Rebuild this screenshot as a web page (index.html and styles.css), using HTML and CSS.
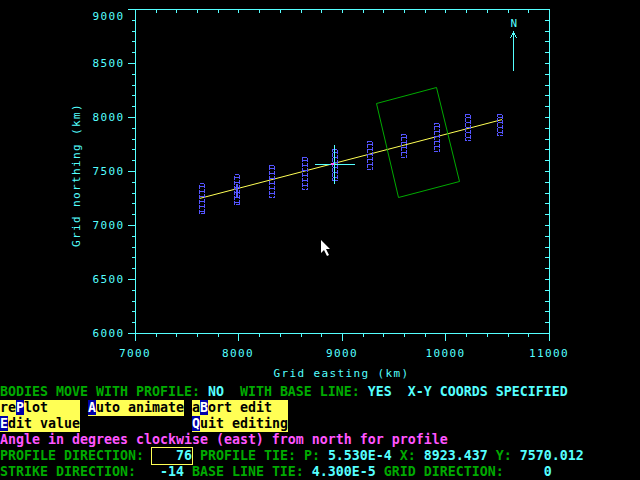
FILE: index.html
```html
<!DOCTYPE html>
<html>
<head>
<meta charset="utf-8">
<link rel="stylesheet" href="styles.css">
</head>
<body>
<div class="screen">
  <svg class="plot" width="640" height="384" viewBox="0 0 640 384">
    <!-- axes frame -->
    <path class="axis" d="M128 9.5H550 M128 333.5H550 M135.5 9V341 M549.5 9V341"/>
    <!-- left ticks -->
    <path class="axis" d="M132 20.5H135 M132 31.5H135 M132 41.5H135 M132 52.5H135 M128 63.5H135
      M132 74.5H135 M132 85.5H135 M132 95.5H135 M132 106.5H135 M128 117.5H135
      M132 128.5H135 M132 139.5H135 M132 149.5H135 M132 160.5H135 M128 171.5H135
      M132 182.5H135 M132 193.5H135 M132 203.5H135 M132 214.5H135 M128 225.5H135
      M132 236.5H135 M132 247.5H135 M132 257.5H135 M132 268.5H135 M128 279.5H135
      M132 290.5H135 M132 301.5H135 M132 311.5H135 M132 322.5H135"/>
    <!-- right ticks (inward) -->
    <path class="axis" d="M545 20.5H549 M545 31.5H549 M545 41.5H549 M545 52.5H549 M545 63.5H549
      M545 74.5H549 M545 85.5H549 M545 95.5H549 M545 106.5H549 M545 117.5H549
      M545 128.5H549 M545 139.5H549 M545 149.5H549 M545 160.5H549 M545 171.5H549
      M545 182.5H549 M545 193.5H549 M545 203.5H549 M545 214.5H549 M545 225.5H549
      M545 236.5H549 M545 247.5H549 M545 257.5H549 M545 268.5H549 M545 279.5H549
      M545 290.5H549 M545 301.5H549 M545 311.5H549 M545 322.5H549"/>
    <!-- bottom ticks -->
    <path class="axis" d="M156.5 333V337 M176.5 333V337 M197.5 333V337 M218.5 333V337 M238.5 333V341
      M259.5 333V337 M280.5 333V337 M301.5 333V337 M321.5 333V337 M342.5 333V341
      M363.5 333V337 M383.5 333V337 M404.5 333V337 M425.5 333V337 M445.5 333V341
      M466.5 333V337 M487.5 333V337 M508.5 333V337 M528.5 333V337"/>
    <!-- top ticks (inward) -->
    <path class="axis" d="M156.5 9V13 M176.5 9V13 M197.5 9V13 M218.5 9V13 M238.5 9V13
      M259.5 9V13 M280.5 9V13 M301.5 9V13 M321.5 9V13 M342.5 9V13
      M363.5 9V13 M383.5 9V13 M404.5 9V13 M425.5 9V13 M445.5 9V13
      M466.5 9V13 M487.5 9V13 M508.5 9V13 M528.5 9V13"/>

    <!-- y labels -->
    <text class="lbl" text-anchor="end" x="124.4" y="20">9000</text>
    <text class="lbl" text-anchor="end" x="124.4" y="67">8500</text>
    <text class="lbl" text-anchor="end" x="124.4" y="121">8000</text>
    <text class="lbl" text-anchor="end" x="124.4" y="175">7500</text>
    <text class="lbl" text-anchor="end" x="124.4" y="229">7000</text>
    <text class="lbl" text-anchor="end" x="124.4" y="283">6500</text>
    <text class="lbl" text-anchor="end" x="124.4" y="337">6000</text>

    <!-- x labels -->
    <text class="lbl" text-anchor="middle" x="135" y="357">7000</text>
    <text class="lbl" text-anchor="middle" x="238" y="357">8000</text>
    <text class="lbl" text-anchor="middle" x="342" y="357">9000</text>
    <text class="lbl" text-anchor="middle" x="445.5" y="357">10000</text>
    <text class="lbl" text-anchor="middle" x="549" y="357">11000</text>

    <!-- axis titles -->
    <text class="lbl" text-anchor="middle" x="341.5" y="377">Grid easting (km)</text>
    <text class="lbl" text-anchor="middle" transform="translate(80 175) rotate(-90)" x="0" y="0">Grid northing (km)</text>

    <!-- north arrow -->
    <text class="lbl" text-anchor="middle" x="514.5" y="27">N</text>
    <path class="axis" d="M513.5 32V71 M510.5 38L513.5 32L516.5 38"/>

    <!-- profile line -->
    <path class="profile" d="M199 198.6L502 119.6"/>

    <!-- bodies -->
    <g class="body">
      <rect x="199.5" y="183.5" width="5" height="30"/>
      <rect x="234.5" y="174.5" width="5" height="30"/>
      <rect x="269.5" y="165.5" width="5" height="32"/>
      <rect x="302.5" y="157.5" width="5" height="32"/>
      <rect x="332.5" y="149.5" width="5" height="31"/>
      <rect x="367.5" y="141.5" width="5" height="28"/>
      <rect x="401.5" y="134.5" width="5" height="23"/>
      <rect x="434.5" y="123.5" width="5" height="28"/>
      <rect x="465.5" y="114.5" width="5" height="26"/>
      <rect x="497.5" y="114.5" width="5" height="21"/>
    </g>
    <g class="bodyh">
      <path d="M202 186V212 M237 177V203 M272 168V196 M305 160V188 M335 152V179 M370 144V168 M404 137V156 M437 126V150 M468 117V139 M500 117V134"/>
    </g>
    <path class="bodybar" d="M237 184V198"/>

    <!-- base line box -->
    <polygon class="box" points="376.5,103.5 436.5,87.5 459.5,181.5 398.5,197.5"/>

    <!-- tie cross -->
    <path class="cross" d="M315 164.5H355 M334.5 145V184"/>
    <rect x="331" y="163" width="3" height="2" fill="#ff55ff"/>

    <!-- mouse cursor -->
    <polygon class="cursor" points="321,240 321,253 324,250 327,256 329,255 326,249 330,249"/>
  </svg>

  <div class="panel">
    <div class="row"><span class="g">BODIES MOVE WITH PROFILE: </span><span class="c">NO</span><span class="g">  WITH BASE LINE: </span><span class="c">YES  X-Y COORDS SPECIFIED</span></div>
    <div class="row menu"><span class="item">re<span class="key">P</span>lot</span><span class="item"><span class="key">A</span>uto animate</span><span class="item">a<span class="key">B</span>ort edit</span></div>
    <div class="row menu"><span class="item"><span class="key">E</span>dit value</span><span class="blank"></span><span class="item"><span class="key">Q</span>uit editing</span></div>
    <div class="row"><span class="m">Angle in degrees clockwise (east) from north for profile</span></div>
    <div class="row"><span class="g">PROFILE DIRECTION: </span><span class="field">76</span><span class="g"> PROFILE TIE: P: </span><span class="c">5.530E-4</span><span class="g"> X: </span><span class="c">8923.437</span><span class="g"> Y: </span><span class="c">7570.012</span></div>
    <div class="row"><span class="g">STRIKE DIRECTION:   </span><span class="c">-14</span><span class="g"> BASE LINE TIE: </span><span class="c">4.300E-5</span><span class="g"> GRID DIRECTION:</span><span class="c">     0</span></div>
  </div>
</div>
</body>
</html>
```

FILE: styles.css
```css
html, body {
  margin: 0;
  padding: 0;
  background: #000;
}

.screen {
  width: 640px;
  height: 480px;
  display: flex;
  flex-direction: column;
  overflow: hidden;
  background: #000;
}

.plot {
  display: block;
  flex: none;
}

.axis {
  fill: none;
  stroke: #55ffff;
  stroke-width: 1;
  shape-rendering: crispEdges;
}

.lbl {
  fill: #55ffff;
  font-family: "DejaVu Sans Mono", monospace;
  font-size: 11px;
  letter-spacing: 1.38px;
}

.profile {
  fill: none;
  stroke: #ffff55;
  stroke-width: 1;
}

.body rect {
  fill: none;
  stroke: #5555ff;
  stroke-width: 1;
  stroke-dasharray: 4 1;
  shape-rendering: crispEdges;
}

.bodyh path {
  fill: none;
  stroke: #5555ff;
  stroke-width: 4;
  stroke-dasharray: 1 4;
  shape-rendering: crispEdges;
}

.bodybar {
  fill: none;
  stroke: #5555ff;
  stroke-width: 2;
  shape-rendering: crispEdges;
}

.box {
  fill: none;
  stroke: #00aa00;
  stroke-width: 1;
}

.cross {
  fill: none;
  stroke: #55ffff;
  stroke-width: 1;
  shape-rendering: crispEdges;
}

.cursor {
  fill: #ffffff;
  stroke: none;
}

.panel {
  font-family: "DejaVu Sans Mono", monospace;
  font-weight: bold;
  font-size: 13.29px;
  line-height: 16px;
}

.row {
  height: 16px;
  white-space: pre;
}

.g { color: #00aa00; }
.c { color: #55ffff; }
.m { color: #ff55ff; }

.menu {
  display: grid;
  grid-template-columns: 80px 96px 96px;
  column-gap: 8px;
}

.item {
  background: #ffff55;
  color: #000;
}

.key {
  background: #0000aa;
  color: #ffffff;
}

.field {
  display: inline-block;
  width: 40px;
  height: 16px;
  vertical-align: top;
  text-align: right;
  color: #55ffff;
  outline: 1px solid #ffff55;
}
```
